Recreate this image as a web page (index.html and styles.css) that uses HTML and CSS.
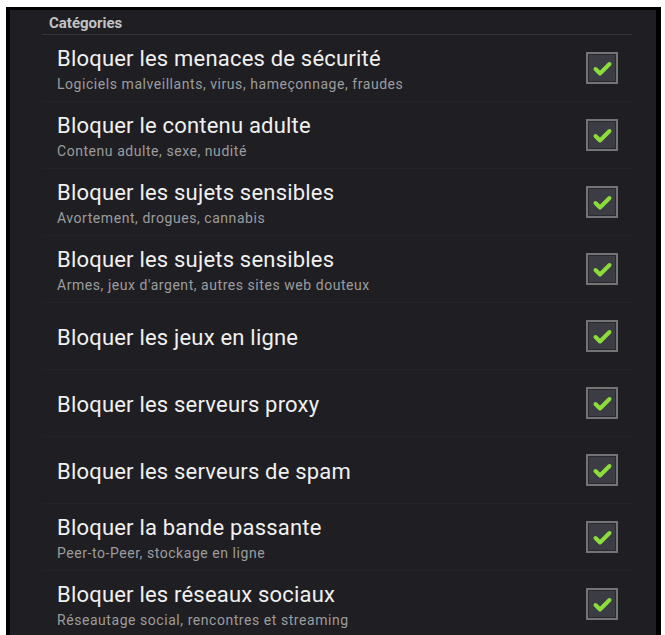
FILE: index.html
```html
<!DOCTYPE html>
<html lang="fr">
<head>
<meta charset="utf-8">
<title>Catégories</title>
<link rel="stylesheet" href="styles.css">
</head>
<body>
<div class="frame">
  <div class="panel">
    <div class="header">Catégories</div>
    <ul class="list">
      <li class="row">
        <div class="text"><div class="title">Bloquer les menaces de sécurité</div><div class="sub">Logiciels malveillants, virus, hameçonnage, fraudes</div></div>
        <svg class="check" viewBox="0 0 32 32"><rect x="1" y="1" width="30" height="30" class="box"/><rect x="3" y="3" width="26" height="26" class="inner"/><path d="M9.5 17 L14 21.5 L23.5 12" class="tick"/></svg>
      </li>
      <li class="row">
        <div class="text"><div class="title">Bloquer le contenu adulte</div><div class="sub">Contenu adulte, sexe, nudité</div></div>
        <svg class="check" viewBox="0 0 32 32"><rect x="1" y="1" width="30" height="30" class="box"/><rect x="3" y="3" width="26" height="26" class="inner"/><path d="M9.5 17 L14 21.5 L23.5 12" class="tick"/></svg>
      </li>
      <li class="row">
        <div class="text"><div class="title">Bloquer les sujets sensibles</div><div class="sub">Avortement, drogues, cannabis</div></div>
        <svg class="check" viewBox="0 0 32 32"><rect x="1" y="1" width="30" height="30" class="box"/><rect x="3" y="3" width="26" height="26" class="inner"/><path d="M9.5 17 L14 21.5 L23.5 12" class="tick"/></svg>
      </li>
      <li class="row">
        <div class="text"><div class="title">Bloquer les sujets sensibles</div><div class="sub">Armes, jeux d'argent, autres sites web douteux</div></div>
        <svg class="check" viewBox="0 0 32 32"><rect x="1" y="1" width="30" height="30" class="box"/><rect x="3" y="3" width="26" height="26" class="inner"/><path d="M9.5 17 L14 21.5 L23.5 12" class="tick"/></svg>
      </li>
      <li class="row">
        <div class="text"><div class="title">Bloquer les jeux en ligne</div></div>
        <svg class="check" viewBox="0 0 32 32"><rect x="1" y="1" width="30" height="30" class="box"/><rect x="3" y="3" width="26" height="26" class="inner"/><path d="M9.5 17 L14 21.5 L23.5 12" class="tick"/></svg>
      </li>
      <li class="row">
        <div class="text"><div class="title">Bloquer les serveurs proxy</div></div>
        <svg class="check" viewBox="0 0 32 32"><rect x="1" y="1" width="30" height="30" class="box"/><rect x="3" y="3" width="26" height="26" class="inner"/><path d="M9.5 17 L14 21.5 L23.5 12" class="tick"/></svg>
      </li>
      <li class="row">
        <div class="text"><div class="title">Bloquer les serveurs de spam</div></div>
        <svg class="check" viewBox="0 0 32 32"><rect x="1" y="1" width="30" height="30" class="box"/><rect x="3" y="3" width="26" height="26" class="inner"/><path d="M9.5 17 L14 21.5 L23.5 12" class="tick"/></svg>
      </li>
      <li class="row">
        <div class="text"><div class="title">Bloquer la bande passante</div><div class="sub">Peer-to-Peer, stockage en ligne</div></div>
        <svg class="check" viewBox="0 0 32 32"><rect x="1" y="1" width="30" height="30" class="box"/><rect x="3" y="3" width="26" height="26" class="inner"/><path d="M9.5 17 L14 21.5 L23.5 12" class="tick"/></svg>
      </li>
      <li class="row">
        <div class="text"><div class="title">Bloquer les réseaux sociaux</div><div class="sub">Réseautage social, rencontres et streaming</div></div>
        <svg class="check" viewBox="0 0 32 32"><rect x="1" y="1" width="30" height="30" class="box"/><rect x="3" y="3" width="26" height="26" class="inner"/><path d="M9.5 17 L14 21.5 L23.5 12" class="tick"/></svg>
      </li>
    </ul>
  </div>
</div>
</body>
</html>
```

FILE: styles.css
```css
html, body {
  margin: 0;
  padding: 0;
  background: #ffffff;
  overflow: hidden;
}

body {
  font-family: Roboto, "Noto Sans", "Liberation Sans", sans-serif;
  height: 635px;
}

.frame {
  margin: 7px 0 0 6px;
  width: 646px;
  height: 628px;
  overflow: hidden;
  background: #1f1f23;
  border-top: 3px solid #000;
  border-left: 4px solid #000;
  border-right: 5px solid #000;
}

.panel {
  padding: 0 24px 0 32px;
}

.header {
  height: 21px;
  padding: 3px 0 0 7px;
  line-height: 21px;
  font-size: 15px;
  font-weight: bold;
  color: #c2c2c4;
  border-bottom: 1px solid #34343a;
}

.list {
  list-style: none;
  margin: 0;
  padding: 0;
}

.row {
  height: 66px;
  display: flex;
  align-items: center;
  justify-content: space-between;
  padding: 0 14px 0 15px;
  border-bottom: 1px solid #242428;
}

.text {
  display: flex;
  flex-direction: column;
  padding-top: 3px;
}

.title {
  font-size: 22px;
  line-height: 26px;
  letter-spacing: 0.2px;
  color: #f0f0f0;
}

.sub {
  font-size: 14px;
  line-height: 18px;
  letter-spacing: 0.55px;
  color: #9c9c9e;
  margin-top: 3px;
}

.check {
  width: 32px;
  height: 32px;
  flex: none;
}

.check .box {
  fill: #2a2a2e;
  stroke: #747476;
  stroke-width: 2;
}

.check .inner {
  fill: #3c3c44;
}

.check .tick {
  fill: none;
  stroke: #8cdc3c;
  stroke-width: 4;
  stroke-linecap: round;
  stroke-linejoin: round;
}
```
